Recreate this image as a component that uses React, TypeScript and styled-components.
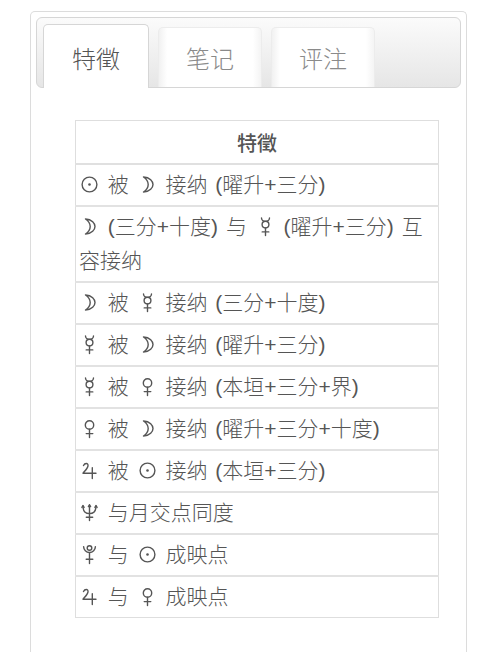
import React from "react";
import styled, { createGlobalStyle } from "styled-components";

const Global = createGlobalStyle`
  html, body { margin: 0; padding: 0; background: #fff; }
  body { font-family: "Liberation Sans", "Noto Sans CJK SC", sans-serif; color: #555; }
`;

const Page = styled.div`
  padding: 11px 33px 0 30px;
  height: 652px;
  box-sizing: border-box;
  overflow: hidden;
`;

const Panel = styled.div`
  height: 100%;
  box-sizing: border-box;
  border: 1px solid #dcdcdc;
  border-bottom: none;
  border-radius: 5px 5px 0 0;
  padding: 5px 5px 0 5px;
`;

const TabBar = styled.div`
  height: 71px;
  box-sizing: border-box;
  border: 1px solid #d6d6d6;
  border-radius: 6px;
  background: linear-gradient(#fbfbfb, #e6e6e6);
  display: flex;
  align-items: flex-end;
  gap: 9px;
  padding-left: 6px;
`;

const Tab = styled.div<{ $active?: boolean }>`
  width: ${(p) => (p.$active ? 106 : 104)}px;
  height: ${(p) => (p.$active ? 64 : 60)}px;
  margin-bottom: ${(p) => (p.$active ? -1 : 0)}px;
  box-sizing: border-box;
  background: ${(p) =>
    p.$active ? "#fff" : "linear-gradient(90deg, #f1f1f1, #fff 8%, #fff 92%, #f4f4f4)"};
  border: 1px solid ${(p) => (p.$active ? "#d6d6d6" : "#ececec")};
  border-bottom: none;
  border-radius: 5px 5px 0 0;
  display: flex;
  align-items: center;
  justify-content: center;
  padding-top: ${(p) => (p.$active ? 2 : 0)}px;
  font-family: "Noto Sans CJK SC", sans-serif;
  font-weight: 300;
  font-size: 24px;
  color: ${(p) => (p.$active ? "#555" : "#8a8a8a")};
`;

const Content = styled.div`
  padding: 32px 21px 0 39px;
`;

const Table = styled.table`
  width: 364px;
  border-collapse: collapse;
  border: 1px solid #dedede;
  font-family: "Liberation Sans", "Noto Sans CJK SC", sans-serif;
  font-size: 21px;
  color: #555;
`;

const Th = styled.th`
  height: 42px;
  font-family: "Noto Sans CJK SC", sans-serif;
  font-weight: 500;
  font-size: 20px;
  color: #555;
  text-align: center;
  border-bottom: 2px solid #e0e0e0;
  padding: 0;
`;

const Td = styled.td`
  padding: 3px 6px 3px 3px;
  line-height: 34px;
  height: 34px;
  word-spacing: 2px;
  border-top: 2px solid #e2e2e2;
  font-weight: 300;
`;

const Icon = styled.svg`
  display: inline-block;
  width: 21px;
  height: 21px;
  vertical-align: -3px;
  fill: none;
  stroke: #555;
  stroke-width: 1.4;
  stroke-linecap: round;
  stroke-linejoin: round;
`;

type Planet = "sun" | "moon" | "mercury" | "venus" | "jupiter" | "neptune" | "pluto";

const glyphs: Record<Planet, React.ReactNode> = {
  sun: (
    <>
      <circle cx="10.5" cy="10.5" r="7.4" />
      <circle cx="10.5" cy="10.5" r="1.3" fill="#555" stroke="none" />
    </>
  ),
  moon: (
    <path d="M6.5 3 C13 3.2 16 7.5 16 10.5 C16 13.5 13 17.8 6.5 18 C9.8 15.8 11.2 13.2 11.2 10.5 C11.2 7.8 9.8 5.2 6.5 3 Z" />
  ),
  mercury: (
    <>
      <path d="M6.5 2 A4 3.4 0 0 0 14.5 2" />
      <circle cx="10.5" cy="8.6" r="3.4" />
      <path d="M10.5 12 V19.5 M7.2 15.9 H13.8" />
    </>
  ),
  venus: (
    <>
      <circle cx="10.5" cy="7" r="4.2" />
      <path d="M10.5 11.2 V19.5 M7.2 15.6 H13.8" />
    </>
  ),
  jupiter: (
    <path d="M4.5 5.5 C5.8 2.8 9.4 2.8 9 5.8 C8.7 8.2 6 10.8 4 13.2 H17 M13.3 7.8 V18.5" />
  ),
  neptune: (
    <>
      <path d="M4 4 C4 10 6.5 11.6 10.5 11.6 C14.5 11.6 17 10 17 4 M10.5 3 V18.5 M7.3 15.2 H13.7" />
      <path d="M2.9 5.4 L4 3.6 L5.1 5.4 M15.9 5.4 L17 3.6 L18.1 5.4 M9.4 4.6 L10.5 2.8 L11.6 4.6" />
    </>
  ),
  pluto: (
    <>
      <path d="M4.6 2.6 A5.9 5.9 0 0 0 16.4 2.6" />
      <circle cx="10.5" cy="4" r="2.3" />
      <path d="M10.5 8.6 V19.5 M7.2 15.2 H13.8" />
    </>
  ),
};

const Glyph = ({ p }: { p: Planet }) => (
  <Icon viewBox="0 0 21 21" aria-hidden>
    {glyphs[p]}
  </Icon>
);

type Part = string | Planet;
const planets = new Set<string>(["sun", "moon", "mercury", "venus", "jupiter", "neptune", "pluto"]);

const rows: Part[][] = [
  ["sun", " 被 ", "moon", " 接纳 (曜升+三分)"],
  ["moon", " (三分+十度) 与 ", "mercury", " (曜升+三分) 互容接纳"],
  ["moon", " 被 ", "mercury", " 接纳 (三分+十度)"],
  ["mercury", " 被 ", "moon", " 接纳 (曜升+三分)"],
  ["mercury", " 被 ", "venus", " 接纳 (本垣+三分+界)"],
  ["venus", " 被 ", "moon", " 接纳 (曜升+三分+十度)"],
  ["jupiter", " 被 ", "sun", " 接纳 (本垣+三分)"],
  ["neptune", " 与月交点同度"],
  ["pluto", " 与 ", "sun", " 成映点"],
  ["jupiter", " 与 ", "venus", " 成映点"],
];

export default function App() {
  return (
    <>
      <Global />
      <Page>
        <Panel>
          <TabBar>
            <Tab $active>特徵</Tab>
            <Tab>笔记</Tab>
            <Tab>评注</Tab>
          </TabBar>
          <Content>
            <Table>
              <thead>
                <tr>
                  <Th>特徵</Th>
                </tr>
              </thead>
              <tbody>
                {rows.map((r, i) => (
                  <tr key={i}>
                    <Td>
                      {r.map((p, j) =>
                        planets.has(p) ? (
                          <Glyph key={j} p={p as Planet} />
                        ) : (
                          <React.Fragment key={j}>{p}</React.Fragment>
                        )
                      )}
                    </Td>
                  </tr>
                ))}
              </tbody>
            </Table>
          </Content>
        </Panel>
      </Page>
    </>
  );
}
